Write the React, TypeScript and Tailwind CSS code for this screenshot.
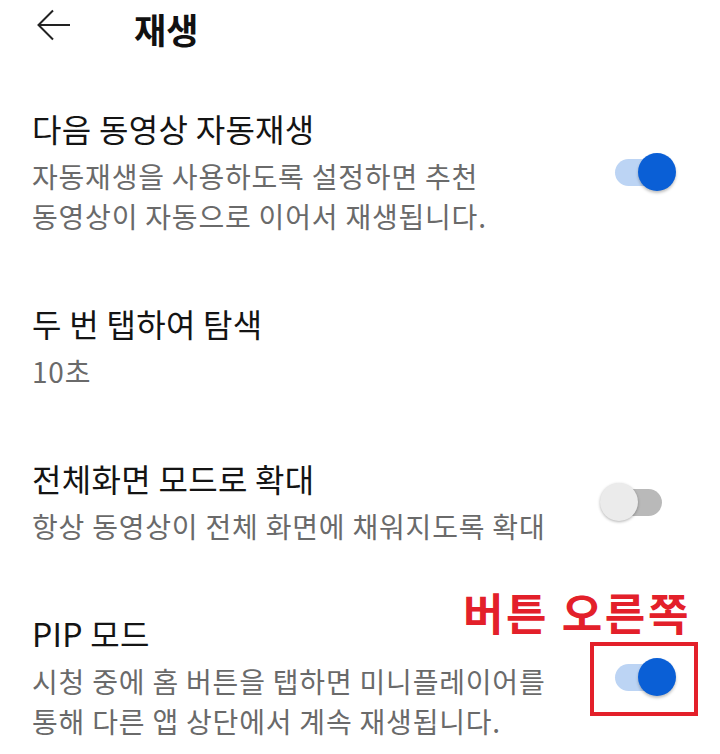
import React from "react";

type Item = {
  title: string;
  lines: string[];
  toggle?: boolean;
};

const items: Item[] = [
  {
    title: "다음 동영상 자동재생",
    lines: ["자동재생을 사용하도록 설정하면 추천", "동영상이 자동으로 이어서 재생됩니다."],
    toggle: true,
  },
  { title: "두 번 탭하여 탐색", lines: ["10초"] },
  {
    title: "전체화면 모드로 확대",
    lines: ["항상 동영상이 전체 화면에 채워지도록 확대"],
    toggle: false,
  },
  {
    title: "PIP 모드",
    lines: ["시청 중에 홈 버튼을 탭하면 미니플레이어를", "통해 다른 앱 상단에서 계속 재생됩니다."],
    toggle: true,
  },
];

function Toggle({ on }: { on: boolean }) {
  return (
    <div className="relative w-[76px] h-[38px] shrink-0">
      <div
        className={
          on
            ? "absolute left-[15px] top-[6px] w-[47px] h-[27px] rounded-full bg-[#bcd4f4]"
            : "absolute left-[15px] top-[6px] w-[47px] h-[27px] rounded-full bg-[#b9b9b9]"
        }
      />
      {on ? (
        <div className="absolute right-0 top-0 w-[38px] h-[38px] rounded-full bg-[#0a5fd6] shadow-[0_2px_3px_rgba(0,0,0,0.25)]" />
      ) : (
        <div className="absolute left-0 top-0 w-[38px] h-[38px] rounded-full bg-[#ebebeb] shadow-[0_1px_3px_rgba(0,0,0,0.3)]" />
      )}
    </div>
  );
}

export default function App() {
  return (
    <div
      className="relative w-[720px] h-[754px] overflow-hidden bg-white"
      style={{ fontFamily: '"Noto Sans CJK KR", "Noto Sans", sans-serif' }}
    >
      <header className="flex items-center h-[52px] pl-[37px]">
        <svg width="34" height="32" viewBox="0 0 34 32" fill="none" className="mt-[-2px]">
          <path d="M33 16H2M16 1.5L1.5 16L16 30.5" stroke="#222" strokeWidth="2" />
        </svg>
        <h1 className="ml-[63px] text-[35px] font-bold text-[#111] leading-none mt-[4px]">재생</h1>
      </header>

      <div className="flex flex-col gap-[67px] pt-[56px] pl-[32px] pr-[44px]">
        {items.map((it) => (
          <div key={it.title} className="flex items-center">
            <div className="flex-1 flex flex-col gap-[8px]">
              <div className="text-[32px] leading-[40px] text-[#141414] tracking-[0.3px]">{it.title}</div>
              <div className="text-[28px] leading-[40px] text-[#6a6a6a] tracking-[0.8px]">
                {it.lines.map((l) => (
                  <div key={l}>{l}</div>
                ))}
              </div>
            </div>
            {it.toggle !== undefined && <Toggle on={it.toggle} />}
          </div>
        ))}
      </div>

      {/* annotation over the PIP switch */}
      <div className="absolute left-[463px] top-[586px] text-[44px] leading-[52px] font-bold text-[#e3202a] tracking-[2.6px]">
        버튼 오른쪽
      </div>
      <div className="absolute left-[590px] top-[642px] w-[108px] h-[74px] border-[4.5px] border-[#e3202a]" />
    </div>
  );
}
